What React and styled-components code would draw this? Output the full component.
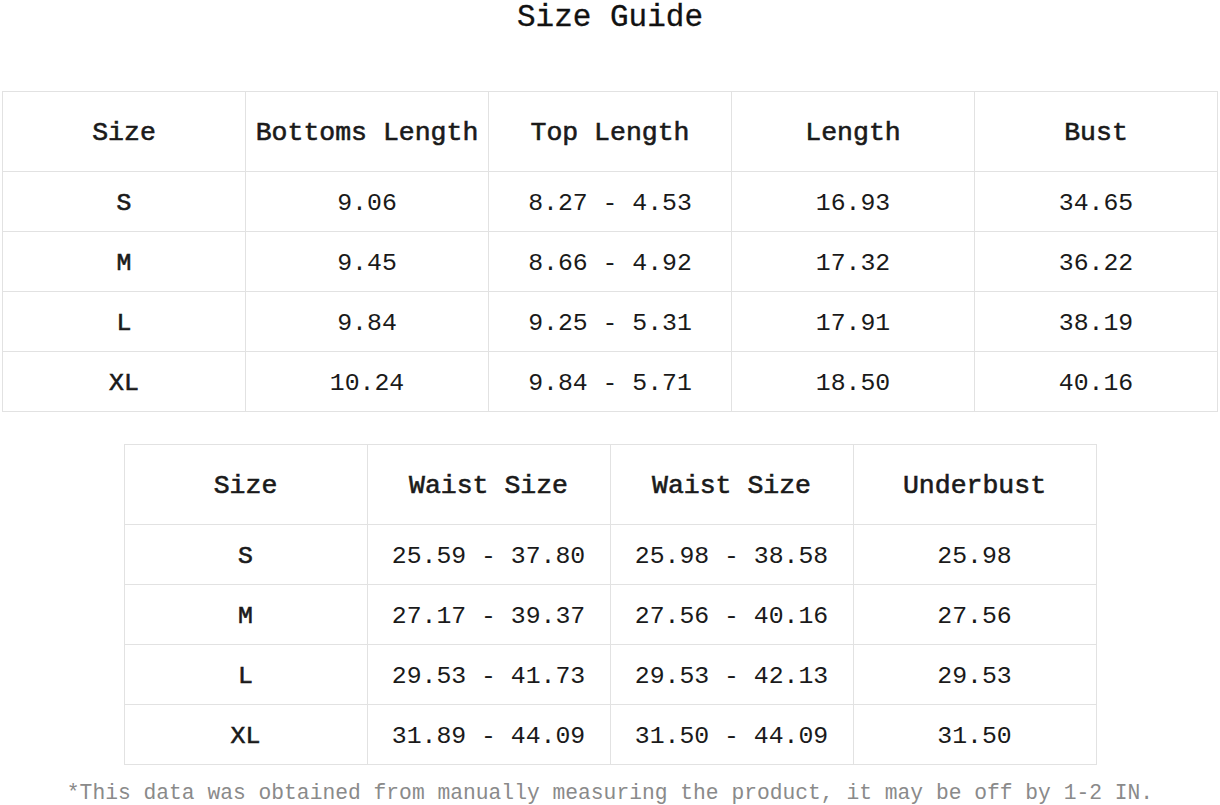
import React from 'react';
import styled, { createGlobalStyle } from 'styled-components';

const GlobalStyle = createGlobalStyle`
  body {
    margin: 0;
    background: #fff;
    font-family: "Liberation Mono", "DejaVu Sans Mono", monospace;
    color: #111;
  }
`;

const Page = styled.div`
  width: 1220px;
  height: 805px;
  display: flex;
  flex-direction: column;
  align-items: center;
  overflow: hidden;
`;

const Title = styled.h1`
  margin: 0;
  padding-top: 1px;
  font-size: 31px;
  line-height: 34px;
  font-weight: 400;
  color: #111;
  -webkit-text-stroke: 0.3px #111;
`;

const Table = styled.table`
  border-collapse: collapse;
  table-layout: fixed;
  width: ${p => p.$width}px;
  margin-top: ${p => p.$top}px;
`;

const Head = styled.th`
  height: 76px;
  padding: 3px 0 0;
  border: 1px solid #e2e2e2;
  font-size: 26.5px;
  font-weight: 400;
  -webkit-text-stroke: 0.6px #1a1a1a;
  text-align: center;
  color: #1a1a1a;
  white-space: nowrap;
`;

const Cell = styled.td`
  height: 56px;
  padding: 3px 0 0;
  border: 1px solid #e2e2e2;
  font-size: 24.8px;
  text-align: center;
  color: #1a1a1a;
  white-space: nowrap;
  -webkit-text-stroke: ${p => (p.$size ? '0.6px #1a1a1a' : '0')};
`;

const Note = styled.p`
  margin: 16px 0 0;
  font-size: 21.3px;
  line-height: 24px;
  color: #8a8a8a;
  white-space: nowrap;
`;

const topHeaders = ['Size', 'Bottoms Length', 'Top Length', 'Length', 'Bust'];
const topRows = [
  ['S', '9.06', '8.27 - 4.53', '16.93', '34.65'],
  ['M', '9.45', '8.66 - 4.92', '17.32', '36.22'],
  ['L', '9.84', '9.25 - 5.31', '17.91', '38.19'],
  ['XL', '10.24', '9.84 - 5.71', '18.50', '40.16'],
];

const bottomHeaders = ['Size', 'Waist Size', 'Waist Size', 'Underbust'];
const bottomRows = [
  ['S', '25.59 - 37.80', '25.98 - 38.58', '25.98'],
  ['M', '27.17 - 39.37', '27.56 - 40.16', '27.56'],
  ['L', '29.53 - 41.73', '29.53 - 42.13', '29.53'],
  ['XL', '31.89 - 44.09', '31.50 - 44.09', '31.50'],
];

function SizeTable({ headers, rows, width, top }) {
  return (
    <Table $width={width} $top={top}>
      <thead>
        <tr>
          {headers.map((h, i) => (
            <Head key={i}>{h}</Head>
          ))}
        </tr>
      </thead>
      <tbody>
        {rows.map((row) => (
          <tr key={row[0]}>
            {row.map((v, i) => (
              <Cell key={i} $size={i === 0}>{v}</Cell>
            ))}
          </tr>
        ))}
      </tbody>
    </Table>
  );
}

export default function App() {
  return (
    <Page>
      <GlobalStyle />
      <Title>Size Guide</Title>
      <SizeTable headers={topHeaders} rows={topRows} width={1216} top={56} />
      <SizeTable headers={bottomHeaders} rows={bottomRows} width={973} top={32} />
      <Note>*This data was obtained from manually measuring the product, it may be off by 1-2 IN.</Note>
    </Page>
  );
}
